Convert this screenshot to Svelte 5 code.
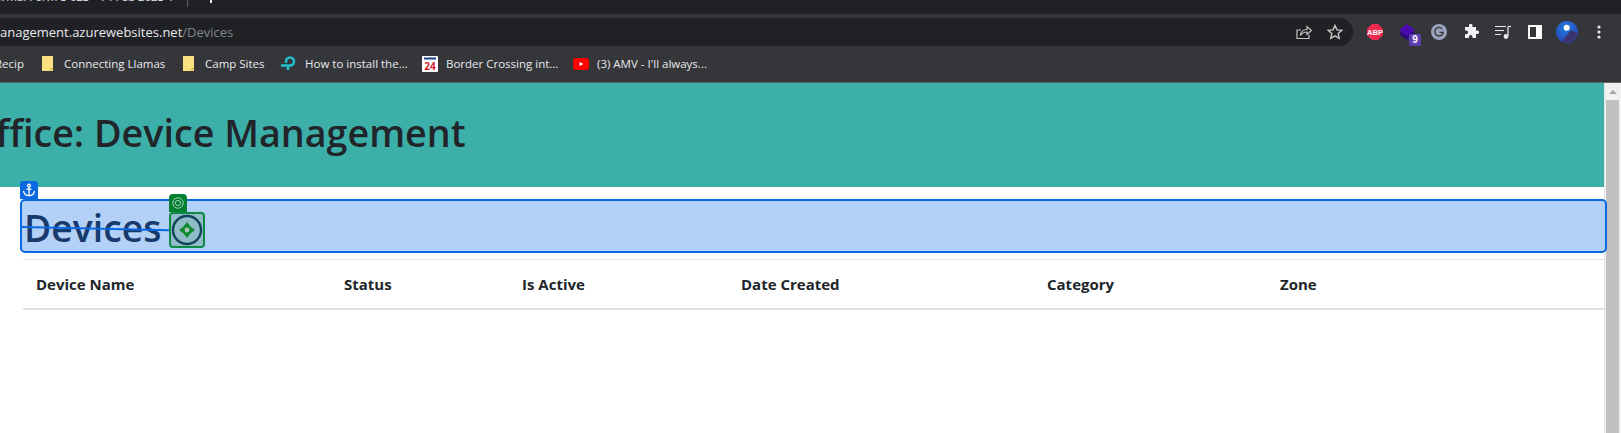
<script>
  const bookmarks = [
    { label: 'Connecting Llamas', icon: 'folder', width: 141 },
    { label: 'Camp Sites', icon: 'folder', width: 100 },
    { label: 'How to install the...', icon: 'ring', width: 141 },
    { label: 'Border Crossing int...', icon: 'cal', width: 151 },
    { label: '(3) AMV - I\'ll always...', icon: 'yt', width: 160 }
  ];
  const columns = [
    { label: 'Device Name', width: 308 },
    { label: 'Status', width: 178 },
    { label: 'Is Active', width: 219 },
    { label: 'Date Created', width: 306 },
    { label: 'Category', width: 233 },
    { label: 'Zone', width: 337 }
  ];
</script>

<div class="window">
  <div class="tabstrip">
    <span class="tabtitle">Normal Form 5 023 - 14 Feb 2023 11</span>
    <span class="tabsep"></span>
    <span class="plus"></span>
  </div>

  <div class="toolbar">
    <div class="omnibox">
      <span class="url">anagement.azurewebsites.net<span class="path">/Devices</span></span>
      <svg class="omni-icon" viewBox="0 0 16 16" fill="none" stroke="#c4c7c5" stroke-width="1.2">
        <path d="M13 10.500v4H1v-8.500h4" />
        <path d="M4.500 11.500c.3-3.800 3-6 6.500-6V2.500L15.500 6.500 11 10.500V8c-2.500 0-5 1-6.500 3.500z" />
      </svg>
      <svg class="omni-icon star" viewBox="0 0 16 16" fill="none" stroke="#c4c7c5" stroke-width="1.4">
        <path d="M8 1.500l2 4.400 4.700.5-3.500 3.200 1 4.700L8 11.900l-4.200 2.400 1-4.700L1.300 6.400 6 5.900z" />
      </svg>
    </div>
    <div class="extensions">
      <svg class="ext abp" viewBox="0 0 16 16">
        <path d="M5 0h6l5 5v6l-5 5H5l-5-5V5z" fill="#ee2a50" />
        <text x="8" y="10.800" text-anchor="middle" font-size="7.500" font-weight="700" fill="#fff">ABP</text>
      </svg>
      <span class="ext stack">
        <svg viewBox="0 0 16 16" width="16" height="16">
          <path d="M8 4l8 6-8 6-8-6z" fill="#2a0a78" />
          <path d="M8 0l8 6-8 6-8-6z" fill="#4a0ab0" />
        </svg>
        <span class="count">9</span>
      </span>
      <svg class="ext grammar" viewBox="0 0 16 16">
        <circle cx="8" cy="8" r="8" fill="#9aa3bd" />
        <path d="M11.300 5a4.200 4.200 0 1 0 .9 3.300H8.500" fill="none" stroke="#35363a" stroke-width="1.300" />
      </svg>
      <svg class="ext puzzle" viewBox="0 0 16 16">
        <path d="M6 1.500a1.700 1.700 0 0 1 3.400 0V3H13v3.500h1.300a1.800 1.800 0 0 1 0 3.600H13V14H9.500v-1.300a1.800 1.800 0 0 0-3.600 0V14H2v-3.800h1.200a1.900 1.900 0 0 0 0-3.800H2V3h4z" fill="#f1f3f4" />
      </svg>
      <svg class="ext music" viewBox="0 0 16 16" fill="none" stroke="#e8eaed" stroke-width="1.200">
        <path d="M0 2.500h11M0 6.500h9M0 10.500h6" />
        <path d="M13 2.500v9.500" />
        <path d="M13 2.500h3" />
        <circle cx="11" cy="12.500" r="1.800" fill="#e8eaed" />
      </svg>
      <svg class="ext panel" viewBox="0 0 14 14">
        <path fill-rule="evenodd" d="M0 0h14v14H0zM2 2v10h6V2z" fill="#fff" />
      </svg>
      <svg class="ext avatar" viewBox="0 0 22 22">
        <defs>
          <radialGradient id="av" cx="0.450" cy="0.300" r="0.800">
            <stop offset="0" stop-color="#1d7be0" />
            <stop offset="1" stop-color="#2c3fb0" />
          </radialGradient>
        </defs>
        <circle cx="11" cy="11" r="11" fill="url(#av)" />
        <path d="M6 20.200L15 9l6.900 3.500A11 11 0 0 1 6 20.200z" fill="#3a3370" />
        <circle cx="10.700" cy="6.700" r="3" fill="#fff" />
      </svg>
      <svg class="ext dots" viewBox="0 0 4 14" fill="#e8eaed">
        <circle cx="2" cy="2" r="1.600" />
        <circle cx="2" cy="7" r="1.600" />
        <circle cx="2" cy="12" r="1.600" />
      </svg>
    </div>
  </div>

  <div class="bookmarks">
    <span class="bm first">Recip</span>
    {#each bookmarks as b}
      <span class="bm" style="width: {b.width}px">
        {#if b.icon === 'folder'}
          <svg class="bm-icon" viewBox="0 0 16 16">
            <path d="M2 0h11v15H2z" fill="#fbdf7e" />
            <path d="M10.500 15v-3H13z" fill="#c9a93f" />
          </svg>
        {:else if b.icon === 'ring'}
          <svg class="bm-icon" viewBox="0 0 16 16" fill="none" stroke="#23bdc9" stroke-width="2.600">
            <path d="M5 7V5.500A4 4 0 1 1 9 9.500H7V14" />
            <path d="M0 9.500h6" />
          </svg>
        {:else if b.icon === 'cal'}
          <svg class="bm-icon" viewBox="0 0 16 16">
            <rect width="16" height="16" rx="1" fill="#fff" />
            <rect x="2" y="1.500" width="12" height="2" fill="#1a3f8c" />
            <text x="8" y="14" text-anchor="middle" font-size="10" font-weight="700" fill="#d3202a">24</text>
          </svg>
        {:else}
          <svg class="bm-icon" viewBox="0 0 16 12">
            <rect width="16" height="12" rx="3" fill="#f00" />
            <path d="M6.500 4v4L10.500 6z" fill="#fff" />
          </svg>
        {/if}
        {b.label}
      </span>
    {/each}
  </div>

  <div class="viewport">
    <main class="page">
      <header class="banner">
        <h1>Office: Device Management</h1>
      </header>

      <div class="content">
        <div class="selected">
          <span class="anchor-tag">
            <svg viewBox="0 0 16 16" width="14" height="14" fill="none" stroke="#fff" stroke-width="1.500">
              <circle cx="8" cy="2.800" r="1.600" />
              <path d="M8 4.500V14.500M5 7h6M1.800 9c.4 3.500 3 5.500 6.200 5.500s5.800-2 6.200-5.500" />
            </svg>
          </span>
          <h2>Devices</h2>
          <span class="link-line"></span>
          <span class="target-tag">
            <svg viewBox="0 0 16 16" width="12" height="12" fill="none" stroke="#a9cbbd" stroke-width="1.300">
              <circle cx="8" cy="8" r="7" />
              <circle cx="8" cy="8" r="3.500" />
            </svg>
          </span>
          <span class="target">
            <svg viewBox="0 0 32 32" width="32" height="32" fill="none">
              <circle cx="16" cy="16" r="14" stroke="#12455c" stroke-width="2.400" />
              <path d="M16 8L19 12h-6zM16 24L13 20h6zM8 16L12 13v6zM24 16L20 19v-6z" fill="#0f8a2e" />
              <circle cx="16" cy="16" r="5" fill="#0f8a2e" />
              <circle cx="16" cy="16" r="2.400" fill="#a9c4bc" />
            </svg>
          </span>
        </div>

        <table>
          <thead>
            <tr>
              {#each columns as c}
                <th style="width: {c.width}px">{c.label}</th>
              {/each}
            </tr>
          </thead>
        </table>
      </div>
    </main>

    <div class="scrollbar">
      <span class="arrow"></span>
      <span class="thumb"></span>
    </div>
  </div>
</div>

<style>
  :global(body) {
    margin: 0;
    background: #fff;
    overflow: hidden;
  }

  .window {
    width: 1621px;
    height: 433px;
    overflow: hidden;
    font-family: "Open Sans", "Noto Sans", sans-serif;
  }

  .tabstrip {
    height: 14px;
    background: #202124;
    display: flex;
    align-items: flex-start;
    overflow: hidden;
  }
  .tabtitle {
    margin: -9px 12px 0 -14px;
    font-size: 11.500px;
    color: #e8eaed;
    white-space: nowrap;
    line-height: 12px;
    width: 189px;
    overflow: hidden;
    flex-shrink: 0;
  }
  .tabsep {
    width: 1px;
    height: 7px;
    background: #5f6368;
  }
  .plus {
    width: 2px;
    height: 3px;
    background: #e8eaed;
    margin-left: 22px;
  }

  .toolbar {
    height: 32px;
    box-sizing: border-box;
    padding-top: 4px;
    background: #35363a;
    display: flex;
    align-items: flex-start;
  }
  .omnibox {
    width: 1353px;
    height: 28px;
    background: #202124;
    border-radius: 0 14px 14px 0;
    display: flex;
    align-items: center;
    padding-right: 10px;
    box-sizing: border-box;
    flex-shrink: 0;
  }
  .url {
    flex: 1;
    font-size: 13px;
    color: #e8eaed;
    white-space: nowrap;
  }
  .path {
    color: #80868b;
  }
  .omni-icon {
    width: 16px;
    height: 16px;
  }
  .omni-icon.star {
    margin-left: 15px;
  }

  .extensions {
    flex: 1;
    display: flex;
    align-items: center;
    height: 28px;
    padding-left: 14px;
  }
  .ext {
    width: 16px;
    height: 16px;
    flex-shrink: 0;
    font-family: "Liberation Sans", sans-serif;
  }
  .abp,
  .grammar,
  .puzzle {
    margin-right: 16px;
  }
  .stack {
    position: relative;
    display: block;
    margin: 0 16px 0 0;
  }
  .count {
    position: absolute;
    left: 10px;
    top: 10px;
    width: 12px;
    height: 12px;
    background: #5b3db0;
    color: #fff;
    border-radius: 1px;
    font: 700 10px/12px "Liberation Sans", sans-serif;
    text-align: center;
  }
  .music {
    margin-right: 17px;
  }
  .panel {
    width: 14px;
    height: 14px;
    margin-right: 14px;
  }
  .avatar {
    width: 22px;
    height: 22px;
    margin-right: 19px;
  }
  .dots {
    width: 4px;
    height: 14px;
  }

  .bookmarks {
    height: 37px;
    box-sizing: border-box;
    border-bottom: 1px solid #5f6368;
    background: #35363a;
    color: #e8eaed;
    font-size: 11.500px;
    display: flex;
    align-items: center;
    white-space: nowrap;
    padding-bottom: 1px;
  }
  .bm {
    display: flex;
    align-items: center;
    flex-shrink: 0;
  }
  .bm.first {
    margin-left: -5px;
    width: 45px;
  }
  .bm-icon {
    width: 16px;
    height: 16px;
    margin-right: 8px;
  }

  .viewport {
    display: flex;
    height: 350px;
  }
  .page {
    width: 1604px;
    flex-shrink: 0;
    position: relative;
  }
  .banner {
    height: 104px;
    box-sizing: border-box;
    padding-bottom: 4px;
    background: #3cafa9;
    color: #212529;
    display: flex;
    align-items: center;
    overflow: hidden;
  }
  h1 {
    margin: 0 0 0 -34px;
    font-size: 37.700px;
    font-weight: 600;
    line-height: 1.2;
    white-space: nowrap;
  }

  .content {
    padding: 12px 0 0 23px;
  }
  .selected {
    position: relative;
    width: 1587px;
    height: 54px;
    margin-left: -3px;
    box-sizing: border-box;
    border: 2px solid #0a69e0;
    border-radius: 5px;
    background: #b3d1f6;
    display: flex;
    align-items: center;
    padding: 5px 0 0 2px;
  }
  h2 {
    margin: 0;
    font-size: 37.300px;
    font-weight: 600;
    line-height: 1.2;
    color: #17396b;
  }
  .anchor-tag {
    position: absolute;
    left: -2px;
    top: -20px;
    width: 18px;
    height: 18px;
    background: #0a69e0;
    border-radius: 3px 3px 0 0;
    display: flex;
    align-items: center;
    justify-content: center;
  }
  .link-line {
    position: absolute;
    left: 0;
    top: 25px;
    width: 148px;
    height: 2px;
    background: #0a69e0;
    transform: rotate(1.3deg);
    transform-origin: left center;
  }
  .target-tag {
    position: absolute;
    left: 147px;
    top: -7px;
    width: 18px;
    height: 18px;
    background: #00802f;
    border-radius: 4px 4px 0 0;
    display: flex;
    align-items: center;
    justify-content: center;
  }
  .target {
    position: absolute;
    left: 147px;
    top: 11px;
    width: 36px;
    height: 36px;
    box-sizing: border-box;
    border: 2px solid #0c8a43;
    border-radius: 4px;
    background: #8fbcc6;
    display: flex;
    align-items: center;
    justify-content: center;
  }

  table {
    margin-top: 6px;
    width: 1581px;
    border-collapse: collapse;
    table-layout: fixed;
    border-top: 1px solid #dee2e6;
  }
  th {
    text-align: left;
    height: 49px;
    padding: 0 13px;
    box-sizing: border-box;
    font-size: 15px;
    font-weight: 700;
    color: #212529;
    border-bottom: 2px solid #dee2e6;
  }

  .scrollbar {
    flex: 1;
    background: #f1f1f1;
    display: flex;
    flex-direction: column;
    align-items: center;
    border-left: 1px solid #e4e4e4;
    padding-right: 1px;
  }
  .arrow {
    width: 0;
    height: 0;
    margin: 7px 0 6px;
    border-left: 4px solid transparent;
    border-right: 4px solid transparent;
    border-bottom: 4px solid #a3a3a3;
  }
  .thumb {
    width: 13px;
    flex: 1;
    background: #c1c1c1;
  }
</style>
